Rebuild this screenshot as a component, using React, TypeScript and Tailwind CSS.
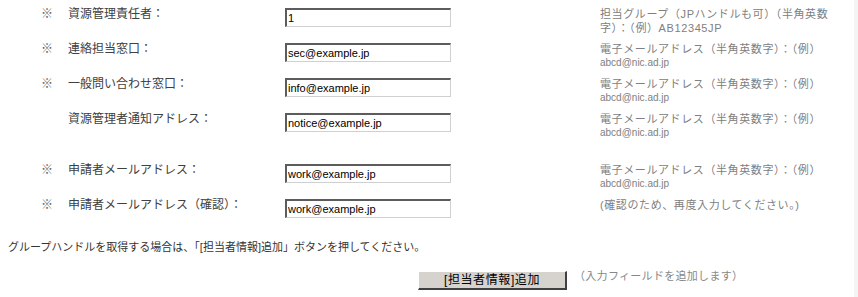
import React from 'react';

type Row = {
    required: boolean;
    label: string;
    value: string;
    hint: string[];
    gapBefore?: boolean;
};

const EMAIL_HINT = ['電子メールアドレス（半角英数字）：（例）', 'abcd@nic.ad.jp'];

const ROWS: Row[] = [
    { required: true, label: '資源管理責任者：', value: '1', hint: ['担当グループ（JPハンドルも可）（半角英数', '字）：（例）AB12345JP'] },
    { required: true, label: '連絡担当窓口：', value: 'sec@example.jp', hint: EMAIL_HINT },
    { required: true, label: '一般問い合わせ窓口：', value: 'info@example.jp', hint: EMAIL_HINT },
    { required: false, label: '資源管理者通知アドレス：', value: 'notice@example.jp', hint: EMAIL_HINT },
    { required: true, label: '申請者メールアドレス：', value: 'work@example.jp', hint: EMAIL_HINT, gapBefore: true },
    { required: true, label: '申請者メールアドレス（確認）：', value: 'work@example.jp', hint: ['(確認のため、再度入力してください。)'] },
];

const font = 'font-["Liberation_Sans","Noto_Sans_CJK_JP",sans-serif]';

const App: React.FC = () => {
    return (
        <div className={`flex w-[858px] h-[297px] bg-white overflow-hidden ${font}`}>
            <div className="flex-1 pt-[7px]">
                {ROWS.map((row, i) => (
                    <div key={i} className={`flex items-start h-[35px] ${row.gapBefore ? 'mt-[16px]' : ''}`}>
                        <div className="w-[68px] pl-[41px] text-[12px] leading-[14px] text-[#666]">
                            {row.required ? '※' : ''}
                        </div>
                        <div className="w-[217px] text-[12px] leading-[14px] text-[#404040] whitespace-nowrap">
                            {row.label}
                        </div>
                        <input
                            type="text"
                            readOnly
                            value={row.value}
                            className="mt-px w-[166px] h-[19px] px-px border-t-2 border-l-2 border-r border-b border-t-[#5c5c5c] border-l-[#5c5c5c] border-r-[#d0d0d0] border-b-[#d0d0d0] bg-white text-[11px] leading-[15px] text-black outline-none font-['Liberation_Sans',sans-serif]"
                        />
                        <div className="ml-[149px] text-[11px] leading-[14px] tracking-[0.6px] text-[#808080] whitespace-nowrap">
                            {row.hint.map((line, j) => (
                                <div key={j} className={line.startsWith('abcd') ? 'text-[10px] tracking-normal' : ''}>
                                    {line}
                                </div>
                            ))}
                        </div>
                    </div>
                ))}

                <p className="mt-[7px] pl-[8px] text-[11px] leading-[14px] text-[#333] whitespace-nowrap">
                    グループハンドルを取得する場合は、「[担当者情報]追加」ボタンを押してください。
                </p>

                <div className="mt-[17px] flex items-start">
                    <button
                        type="button"
                        className="ml-[418px] w-[149px] h-[19px] bg-[#d6d3ce] border-t border-l border-t-white border-l-white border-r-2 border-b-2 border-r-[#404040] border-b-[#404040] text-[12px] leading-[15px] tracking-[0.6px] text-black"
                    >
                        [担当者情報]追加
                    </button>
                    <span className="ml-[7px] -mt-[2px] text-[11px] leading-[14px] tracking-[0.3px] text-[#888] whitespace-nowrap">
                        （入力フィールドを追加します）
                    </span>
                </div>
            </div>
            <div className="w-[4px] bg-[#f4f4f4]" />
        </div>
    );
};

export default App;
